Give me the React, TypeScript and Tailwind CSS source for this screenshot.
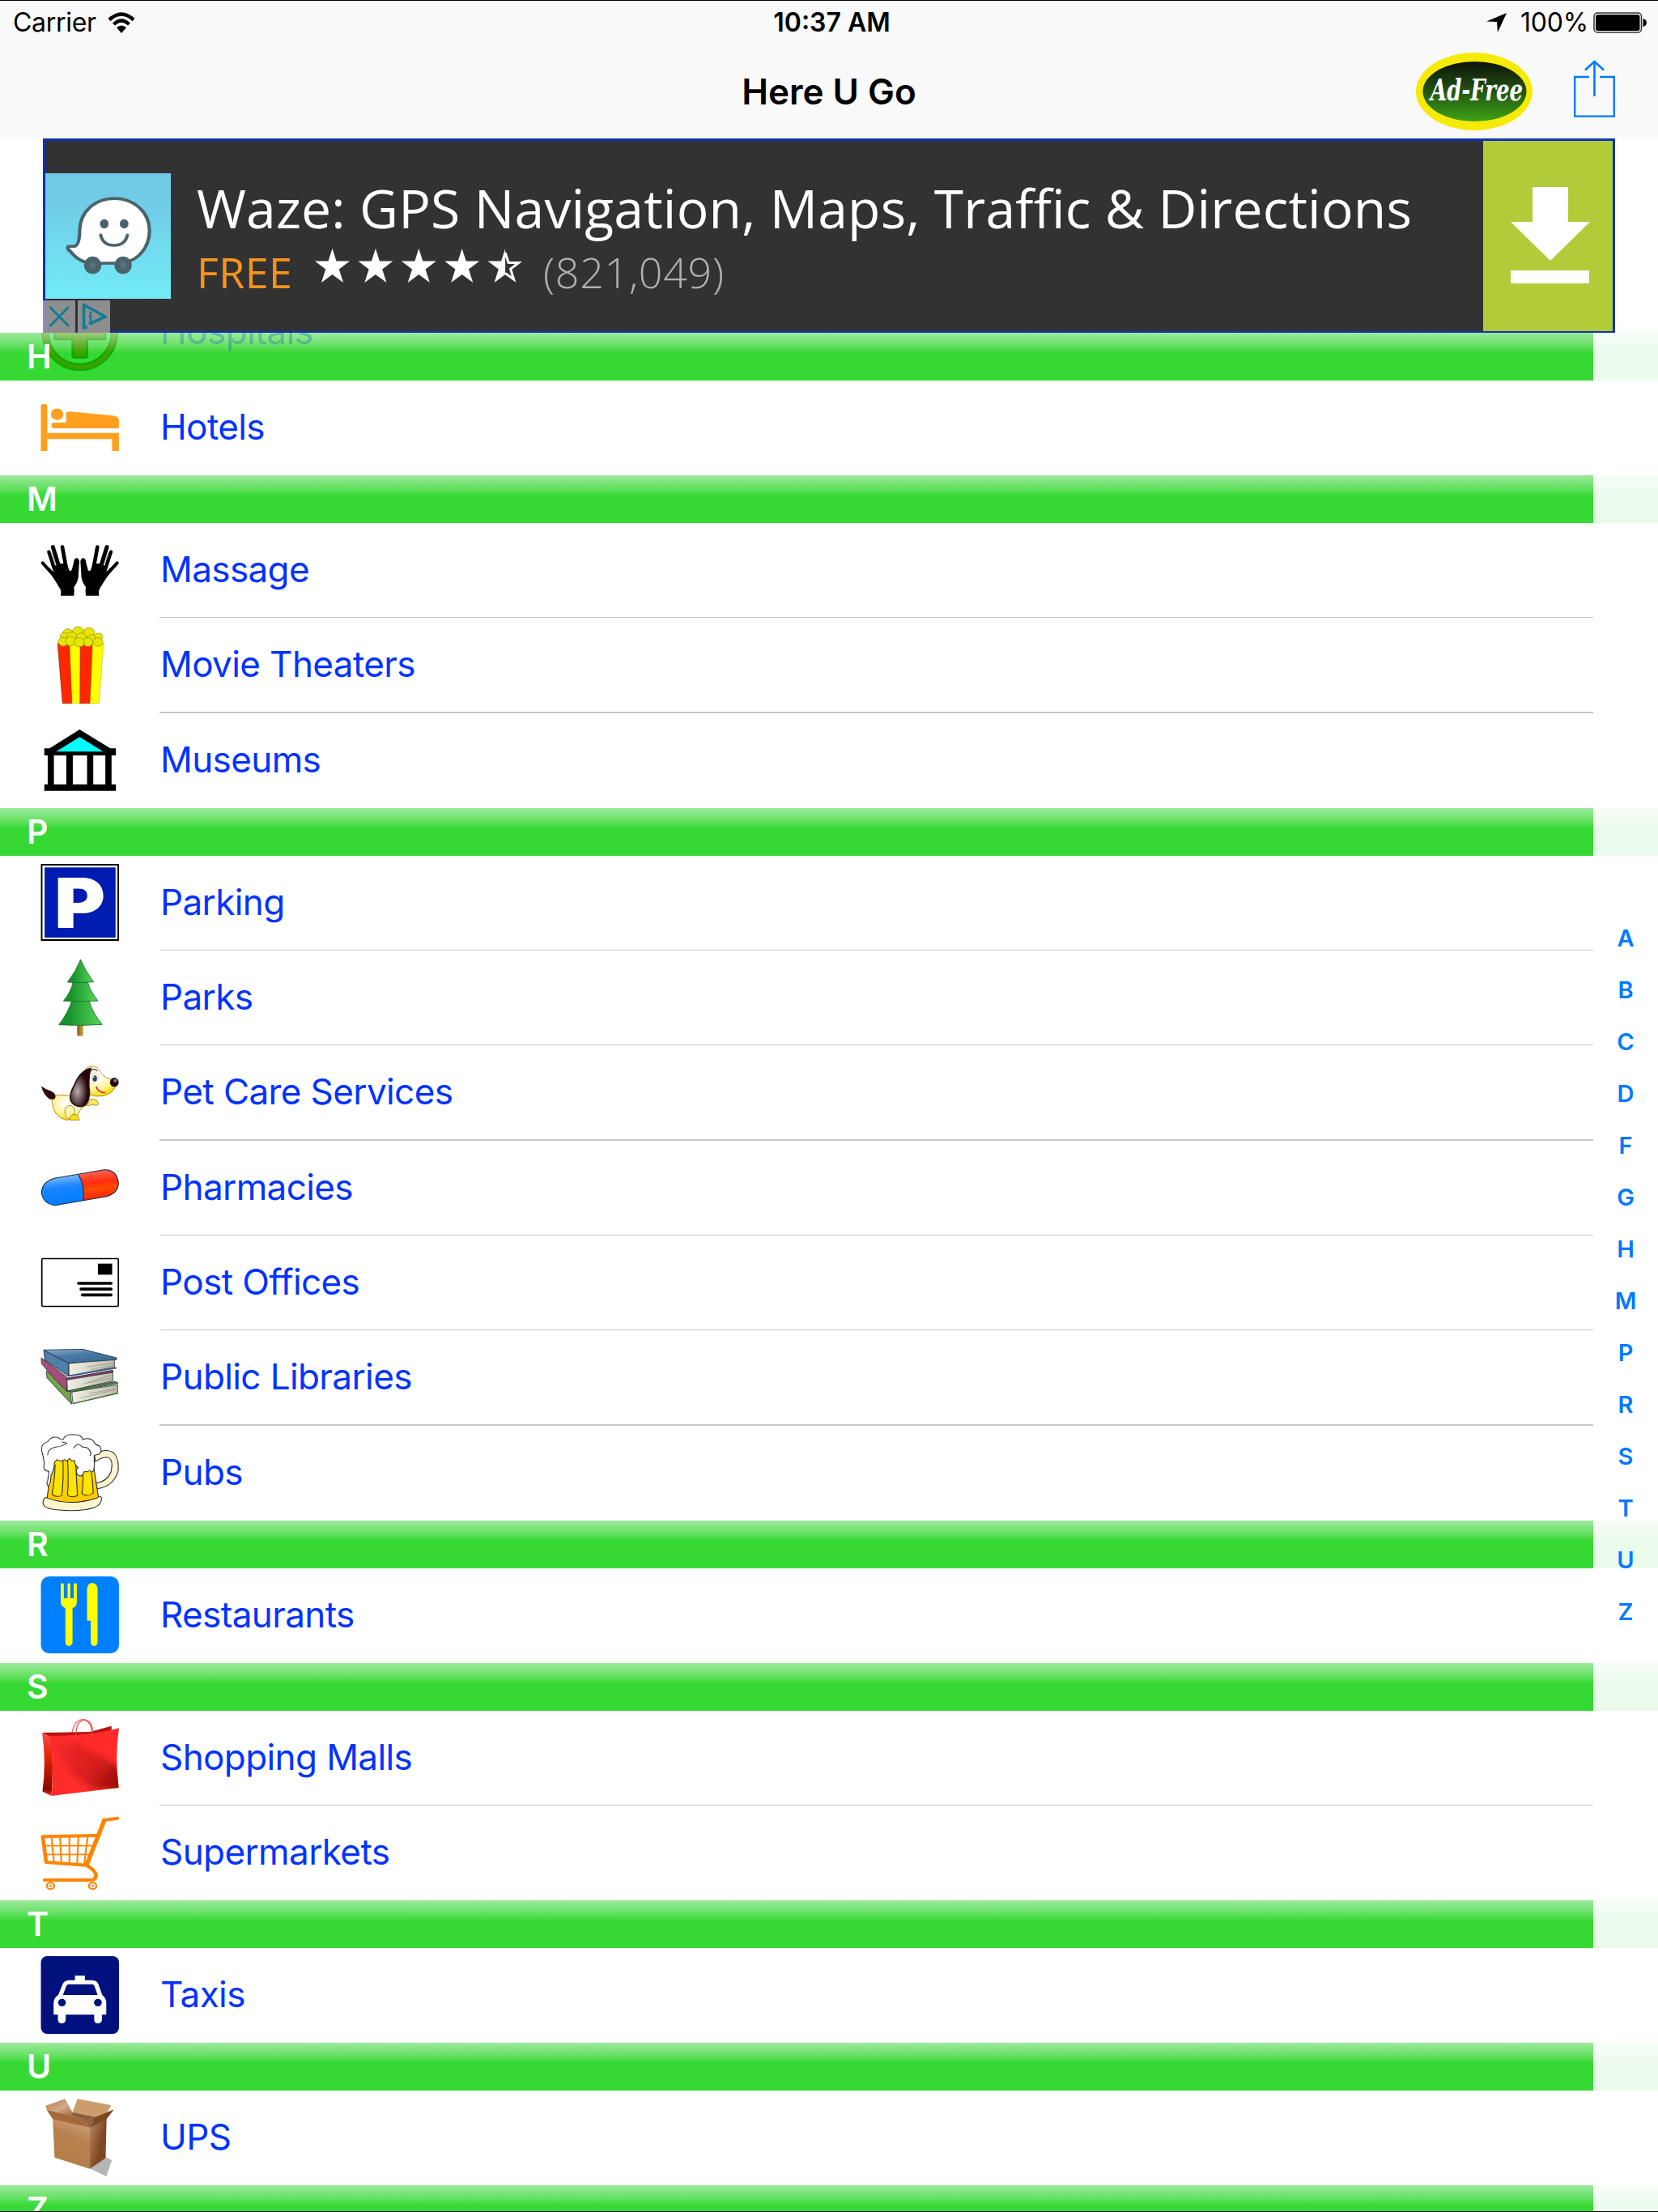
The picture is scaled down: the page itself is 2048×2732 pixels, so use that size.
import React from "react";

type IconProps = { box: string; children: React.ReactNode };

function RowIcon({ box, children }: IconProps) {
  return (
    <svg className="ml-12 h-[117px] w-[100px] shrink-0" viewBox={box} preserveAspectRatio="none" fill="none">
      {children}
    </svg>
  );
}

const HotelIcon = () => (
  <RowIcon box="107.5 1228 224 305.7">
    <g fill="#ff9f1f">
      <path d="M113 1455V1312Q113 1304 122 1304T131 1312V1397H329V1455H310V1417H131V1455Z" />
      <ellipse cx="158" cy="1337" rx="17" ry="19" />
      <path d="M183 1363V1337Q183 1327 192 1328L312 1341Q329 1343 329 1357V1382H150Q142 1382 142 1373T150 1364Z" />
    </g>
  </RowIcon>
);

const MassageIcon = () => {
  const hand = (
    <>
      <path
        d="M43 110L82 168Q96 190 104 204Q108 212 105 227H154Q157 212 154 196Q172 172 171 146L174 100Q172 88 163 88Q154 90 153 104L148 124Q144 142 136 132L128 108L98 108L84 116L82 136Q72 138 66 126Z"
        fill="#000"
      />
      <path d="M38 106L74 146" stroke="#000" strokeWidth="12" strokeLinecap="round" />
      <path d="M61 65L82 130" stroke="#000" strokeWidth="13" strokeLinecap="round" />
      <path d="M76 47L98 118" stroke="#000" strokeWidth="15" strokeLinecap="round" />
      <path d="M111 47L124 118" stroke="#000" strokeWidth="14" strokeLinecap="round" />
      <path d="M69 66L87 112" stroke="#999" strokeWidth="3" />
      <path d="M95 60L107 104L108 84Z" fill="#fff" />
    </>
  );
  return (
    <RowIcon box="24 -42 300 351">
      {hand}
      <g transform="translate(352 0) scale(-1 1)">{hand}</g>
    </RowIcon>
  );
};

const PopcornIcon = () => (
  <RowIcon box="125.4 369 261.3 351">
    <path d="M186 464L202 686H320L334 464Z" fill="#ffff00" stroke="#8a8a00" strokeWidth="1" />
    <path d="M186 464L202 686H232L224 468ZM259 468L258 686H290L298 468Z" fill="#ff2600" stroke="#7a2a00" strokeWidth="1.5" />
    <g fill="#e6e600" stroke="#929200" strokeWidth="2">
      <circle cx="252" cy="420" r="18" />
      <circle cx="287" cy="424" r="18" />
      <circle cx="219" cy="426" r="16" />
      <circle cx="208" cy="438" r="14" />
      <circle cx="317" cy="440" r="14" />
      <circle cx="262" cy="442" r="16" />
      <circle cx="231" cy="438" r="16" />
      <circle cx="294" cy="446" r="14" />
      <circle cx="204" cy="458" r="16" />
      <circle cx="316" cy="459" r="16" />
      <circle cx="228" cy="456" r="17" />
      <circle cx="284" cy="459" r="16" />
      <circle cx="256" cy="460" r="17" />
    </g>
  </RowIcon>
);

const MuseumIcon = () => (
  <RowIcon box="125.4 723 261.3 351">
    <path d="M143 853H160L257 783L356 853H374V879H360V986H374V1010H143V986H154V879H143Z" fill="#000" />
    <path d="M181 865L257 811L333 865Z" fill="#0ff" />
    <path d="M174 879H214V986H174ZM235 879H281V986H235ZM301 879H340V986H301Z" fill="#fff" />
  </RowIcon>
);

const ParkingIcon = () => (
  <RowIcon box="125.4 51 261.3 351">
    <rect x="132" y="81" width="252" height="285" fill="#000" />
    <rect x="137" y="87" width="242" height="273" fill="#fff" />
    <rect x="144" y="94" width="229" height="260" fill="#001bb0" />
    <text x="176" y="317" fontSize="257" fontWeight="900" fontFamily="Inter, sans-serif" fill="#fff" textLength="164" lengthAdjust="spacingAndGlyphs">
      P
    </text>
  </RowIcon>
);

const ParksIcon = () => (
  <RowIcon box="125.4 402 261.3 351">
    <defs>
      <linearGradient id="pine" x1="0" x2="1">
        <stop offset="0.2" stopColor="#17912a" />
        <stop offset="0.9" stopColor="#4ecf55" />
      </linearGradient>
      <linearGradient id="trunk" x1="0" x2="1">
        <stop stopColor="#7d5c14" />
        <stop offset="1" stopColor="#d9a94e" />
      </linearGradient>
    </defs>
    <path d="M249 672H269V716Q259 721 249 716Z" fill="url(#trunk)" />
    <g fill="url(#pine)" stroke="#1d6e2a" strokeWidth="2.5" strokeLinejoin="round">
      <path d="M231 590Q220 632 190 677Q260 682 330 676Q300 636 287 588Z" />
      <path d="M236 518Q230 553 205 589Q260 594 316 588Q290 552 282 516Z" />
      <path d="M260 435Q245 480 218 519Q260 523 302 518Q275 478 260 435Z" />
    </g>
  </RowIcon>
);

const PetIcon = () => (
  <RowIcon box="125.4 753 261.3 351">
    <defs>
      <radialGradient id="fur" cx="0.45" cy="0.35" r="0.65">
        <stop offset="0.25" stopColor="#fffdf0" />
        <stop offset="0.7" stopColor="#fff18b" />
        <stop offset="1" stopColor="#ffd800" />
      </radialGradient>
      <radialGradient id="ear" cx="0.35" cy="0.6" r="0.5">
        <stop stopColor="#b9aeb0" />
        <stop offset="1" stopColor="#250508" />
      </radialGradient>
    </defs>
    <g stroke="#8d6c16" strokeWidth="2">
      <path d="M172 940Q200 934 232 940L286 970Q262 982 255 1002Q246 1028 214 1030Q172 1020 168 962Z" fill="url(#fur)" />
      <path d="M268 975Q290 976 287 955Q305 948 314 960Q322 974 311 976Q300 970 290 976Z" fill="#ffe55c" />
      <path d="M230 976Q208 976 209 1002Q212 1026 228 1026M230 976Q246 988 238 1012" fill="#fff6a8" />
      <path d="M226 1030Q222 1012 239 1009Q254 1010 256 1030Z" fill="#ffdd11" />
      <path d="M262 870Q274 828 300 830Q316 834 325 854Q336 872 362 880L372 908Q356 944 312 942Q290 940 282 930Z" fill="url(#fur)" />
    </g>
    <path d="M293 838Q258 848 242 896Q222 936 228 958Q238 982 264 980Q286 974 289 930Q283 880 293 838Z" fill="url(#ear)" stroke="#250508" strokeWidth="4" />
    <path d="M133 904Q148 918 163 922Q180 930 179 944Q178 956 161 953Q140 938 133 904Z" fill="#2b0a10" />
    <ellipse cx="306" cy="873" rx="11" ry="18" fill="#fff" stroke="#b9a984" strokeWidth="1.5" />
    <ellipse cx="306" cy="876" rx="7" ry="11" fill="#274455" />
    <circle cx="303" cy="871" r="2.5" fill="#fff" />
    <path d="M294 848Q304 834 314 849" stroke="#222" strokeWidth="3" />
    <path d="M310 906Q318 930 340 928" stroke="#d5282b" strokeWidth="4.5" />
    <ellipse cx="369" cy="890" rx="14" ry="17" fill="#25060a" />
    <ellipse cx="372" cy="884" rx="6" ry="6" fill="#8c7a7d" />
  </RowIcon>
);

const PharmacyIcon = () => (
  <RowIcon box="125.4 27 261.3 351">
    <defs>
      <linearGradient id="pillBlue" x1="0.4" y1="0" x2="0.55" y2="1">
        <stop stopColor="#8cc4ff" />
        <stop offset="0.4" stopColor="#1b86ff" />
        <stop offset="1" stopColor="#007bff" />
      </linearGradient>
      <linearGradient id="pillRed" x1="0.4" y1="0" x2="0.55" y2="1">
        <stop stopColor="#ff6a55" />
        <stop offset="0.4" stopColor="#ff2d10" />
        <stop offset="0.6" stopColor="#ff4a00" />
        <stop offset="1" stopColor="#ff2000" />
      </linearGradient>
    </defs>
    <path d="M253 152L176 166Q134 180 134 222Q142 262 177 266L269 248Q274 190 253 152Z" fill="url(#pillBlue)" />
    <path d="M253 152L336 134Q376 132 382 180Q384 220 344 233L269 248Q274 190 253 152Z" fill="url(#pillRed)" />
    <path d="M176 166L336 134Q376 132 382 180Q384 220 344 233L177 266Q142 262 134 222Q134 180 176 166ZM253 152Q274 190 269 248" stroke="#1b2b44" strokeWidth="3" />
  </RowIcon>
);

const PostIcon = () => (
  <RowIcon box="125.4 378 261.3 351">
    <rect x="135" y="463.500" width="247" height="177" rx="4" fill="#fff" stroke="#000" strokeWidth="4.500" />
    <rect x="316" y="482" width="46" height="41" fill="#000" />
    <path d="M254 555H358M262 576.500H358M266 598H358" stroke="#000" strokeWidth="11" strokeLinecap="round" />
  </RowIcon>
);

const LibraryIcon = () => (
  <RowIcon box="24 -18 300 351">
    <defs>
      <linearGradient id="cover" x1="0" x2="0.6" y1="0" y2="1">
        <stop stopColor="#8fb2cd" />
        <stop offset="0.5" stopColor="#4a7aa5" />
        <stop offset="1" stopColor="#3c6a96" />
      </linearGradient>
      <linearGradient id="leaves" x1="0" x2="1">
        <stop stopColor="#f0f0e6" />
        <stop offset="1" stopColor="#bcbbab" />
      </linearGradient>
    </defs>
    <g stroke="#26333b" strokeWidth="2.500" strokeLinejoin="round">
      <path d="M52 132L140 206L146 256Q96 204 54 158Z" fill="#76a24a" />
      <path d="M146 210L316 184V216L150 254Z" fill="url(#leaves)" />
      <path d="M130 207L308 172L318 178L146 211Z" fill="#5a8a35" />
      <path d="M33 84L128 156V209Q78 160 34 106Z" fill="#a64d7c" />
      <path d="M128 164L298 134V170L130 207Z" fill="url(#leaves)" />
      <path d="M126 160L298 130V138L128 166Z" fill="#8d3a67" />
      <path d="M42 55L134 104V153L46 92Z" fill="#4f7ea6" />
      <path d="M135 105L304 86V118L136 151Z" fill="url(#leaves)" />
      <path d="M42 55L186 52L312 84V91L134 104Z" fill="url(#cover)" />
    </g>
    <path d="M136 151L312 121" stroke="#2f5b86" strokeWidth="5" />
    <path d="M150 254L318 214" stroke="#4d742f" strokeWidth="4" />
    <path d="M200 118L300 104M214 128L300 112M190 180L290 160M206 176L290 148M176 234L306 202M210 216L312 198" stroke="#8e8d80" strokeWidth="2" />
  </RowIcon>
);

const PubIcon = () => (
  <RowIcon box="125.4 1083 261.3 351">
    <defs>
      <linearGradient id="beer" x1="0" x2="0" y1="0" y2="1">
        <stop stopColor="#ffdc00" />
        <stop offset="1" stopColor="#ffc800" />
      </linearGradient>
    </defs>
    <g stroke="#2b2b2b" strokeWidth="2.800" strokeLinejoin="round">
      <path
        d="M305 1190Q340 1164 366 1182Q386 1206 381 1252Q366 1308 314 1316L308 1295Q344 1292 358 1254Q368 1206 346 1199Q324 1200 308 1216Z"
        fill="#fbf3cf"
      />
      <path d="M168 1205L152 1352Q230 1384 318 1350L303 1240L296 1200Z" fill="url(#beer)" />
      <path
        d="M146 1348Q136 1360 140 1376Q150 1392 190 1395Q262 1402 304 1386Q328 1376 328 1350Q322 1340 314 1350Q226 1384 146 1348Z"
        fill="#fdf5cc"
      />
      <path d="M178 1226Q176 1290 168 1336Q178 1350 199 1342Q206 1280 203 1206M218 1206Q222 1280 218 1340Q232 1352 250 1341Q246 1270 244 1206M268 1266Q268 1310 264 1334Q280 1348 301 1332Q300 1290 294 1250" fill="#ffe400" />
      <path
        d="M156 1308Q148 1300 154 1286L158 1252Q136 1250 143 1222Q140 1196 135 1178Q130 1150 154 1142Q164 1120 186 1126Q198 1136 204 1134Q210 1112 240 1116Q262 1114 268 1134Q288 1124 302 1140Q306 1154 322 1158Q332 1176 320 1188L304 1192L304 1216Q306 1240 300 1252Q292 1256 290 1248Q280 1256 272 1252Q266 1276 252 1266Q240 1250 252 1238Q240 1228 240 1210L232 1214L224 1204L216 1214L208 1208L196 1214L184 1208L176 1218Q174 1250 164 1268Q166 1290 156 1308Z"
        fill="#fff"
      />
      <path d="M154 1192Q152 1168 180 1162Q204 1158 217 1146M237 1166Q252 1140 266 1162Q288 1158 294 1188L290 1194M200 1145Q210 1142 214 1148" strokeWidth="3" />
    </g>
  </RowIcon>
);

const RestaurantIcon = () => (
  <RowIcon box="125.4 111 261.3 351">
    <rect x="132" y="141" width="252" height="285" rx="27" ry="31" fill="#007fff" />
    <g fill="#ff0">
      <path d="M196 170Q201 162 206 170V222H218V170Q222 162 227 170V222H238V170Q243 162 248 170V238Q246 256 234 258V388Q230 399 222 399T211 388V258Q198 254 196 238Z" />
      <path d="M281 186Q283 166 298 165Q314 167 315 186V388Q312 399 304 399T293 388V305H281Z" />
    </g>
  </RowIcon>
);

const ShoppingIcon = () => (
  <RowIcon box="125.4 639 261.3 351">
    <defs>
      <linearGradient id="bag" gradientUnits="userSpaceOnUse" x1="260" y1="740" x2="350" y2="960">
        <stop stopColor="#ff2d2d" />
        <stop offset="0.22" stopColor="#f52828" />
        <stop offset="0.5" stopColor="#c21a12" />
        <stop offset="0.66" stopColor="#d42020" />
        <stop offset="0.8" stopColor="#ff2d2d" />
      </linearGradient>
      <linearGradient id="bagSide" x1="0" x2="0" y1="0" y2="1">
        <stop stopColor="#ff4b4b" />
        <stop offset="0.4" stopColor="#e02200" />
        <stop offset="0.9" stopColor="#8a0800" />
        <stop offset="1" stopColor="#ff3030" />
      </linearGradient>
      <linearGradient id="bagShade" gradientUnits="userSpaceOnUse" x1="180" y1="790" x2="384" y2="920">
        <stop stopColor="#e42424" stopOpacity="0.6" />
        <stop offset="0.5" stopColor="#d01c1c" stopOpacity="0.75" />
        <stop offset="1" stopColor="#900c00" />
      </linearGradient>
      <filter id="soft" x="-0.2" y="-0.2" width="1.4" height="1.4">
        <feGaussianBlur stdDeviation="9" />
      </filter>
      <clipPath id="bagClip">
        <path d="M162 732Q290 732 384 703Q370 810 383 924L166 954Q176 850 162 732Z" />
      </clipPath>
    </defs>
    <path d="M232 726Q238 672 270 671Q296 674 299 712" stroke="#f66" strokeWidth="3.500" />
    <path d="M136 720L290 717L360 695V716L168 740Z" fill="#b81414" />
    <path d="M136 720L165 736Q174 850 166 954L137 938Q150 830 136 720Z" fill="url(#bagSide)" />
    <path d="M162 732Q290 732 384 703Q370 810 383 924L166 954Q176 850 162 732Z" fill="#ff2b2b" />
    <g clipPath="url(#bagClip)">
      <path d="M175 770L250 755L400 860V935L300 925L230 870Z" fill="url(#bagShade)" filter="url(#soft)" />
    </g>
    <path d="M246 750Q240 680 272 673Q302 684 295 741" stroke="#e94444" strokeWidth="3" />
  </RowIcon>
);

const CartIcon = () => (
  <RowIcon box="125.4 990 261.3 351">
    <g stroke="#ff8400" strokeLinejoin="round" strokeLinecap="round">
      <path d="M379 1037L337 1044L279 1210" strokeWidth="12" />
      <path d="M318 1101L138 1105L149 1200L279 1211Q309 1232 310 1248Q310 1264 296 1266H144" strokeWidth="12" />
      <path d="M146 1139H298M150 1171H288M166 1107L174 1198M194 1107L198 1200M224 1106V1202M253 1106L249 1204M283 1106L272 1204" strokeWidth="5.500" />
      <path d="M337 1044L281 1206" strokeWidth="14" />
      <ellipse cx="163" cy="1288" rx="12" ry="12" strokeWidth="6" />
      <ellipse cx="299" cy="1288" rx="12" ry="12" strokeWidth="6" />
      <circle cx="163" cy="1288" r="3.500" strokeWidth="3" />
      <circle cx="299" cy="1288" r="3.500" strokeWidth="3" />
    </g>
  </RowIcon>
);

const TaxiIcon = () => (
  <RowIcon box="125.4 228 261.3 351">
    <rect x="132" y="258" width="252" height="288" rx="20" ry="23" fill="#00107d" />
    <path
      d="M242 330H274V347H298Q312 348 317 360L330 402Q343 414 343 430V475H329V494Q327 507 316 507T304 494V475H212V494Q210 507 199 507T187 494V475H173V430Q174 412 188 402L202 362Q207 348 222 347H242Z"
      fill="#fff"
    />
    <path d="M220 362H298Q303 363 305 369L315 402H203L214 369Q216 363 220 362Z" fill="#00107d" />
    <ellipse cx="200" cy="430" rx="12.500" ry="14" fill="#00107d" />
    <ellipse cx="316" cy="430" rx="12.500" ry="14" fill="#00107d" />
  </RowIcon>
);

const BoxIcon = () => (
  <RowIcon box="125.4 756 261.3 351">
    <defs>
      <linearGradient id="front" x1="0.6" y1="0" x2="0.4" y2="0.7">
        <stop stopColor="#cfa07a" />
        <stop offset="0.5" stopColor="#b9814f" />
        <stop offset="1" stopColor="#b67e4b" />
      </linearGradient>
      <linearGradient id="side" x1="0" y1="0" x2="0.7" y2="0.5">
        <stop stopColor="#b88a68" />
        <stop offset="1" stopColor="#7f4722" />
      </linearGradient>
      <linearGradient id="flap" x1="0" y1="0" x2="0.9" y2="1">
        <stop stopColor="#b87e50" />
        <stop offset="0.6" stopColor="#d0a98b" />
        <stop offset="1" stopColor="#a86f42" />
      </linearGradient>
    </defs>
    <path d="M290 1045L342 1003L361 1014L343 1074Z" fill="#b5b5b5" />
    <path d="M170 858L290 890V1046L176 1004Z" fill="url(#front)" />
    <path d="M290 890L344 858L341 1006L290 1046Z" fill="url(#side)" />
    <path d="M147 812L210 787L234 838L232 850L151 828Z" fill="url(#flap)" />
    <path d="M250 787L359 810L346 836L310 854L234 836Z" fill="#cb9c6c" />
    <path d="M234 836L310 854L290 884L262 858L232 848Z" fill="#8c5a40" />
    <path d="M151 828L264 857L290 893L170 862Z" fill="#a5683a" />
    <path d="M368 826L306 855L290 893L344 862Z" fill="#7d4824" />
    <path d="M264 857L306 855L290 893Z" fill="#94613e" />
  </RowIcon>
);

type Item = { name: string; icon: () => React.ReactElement; tall?: boolean };
type Section = { letter: string; items: Item[] };

const sections: Section[] = [
  { letter: "H", items: [{ name: "Hotels", icon: HotelIcon }] },
  {
    letter: "M",
    items: [
      { name: "Massage", icon: MassageIcon },
      { name: "Movie Theaters", icon: PopcornIcon, tall: true },
      { name: "Museums", icon: MuseumIcon },
    ],
  },
  {
    letter: "P",
    items: [
      { name: "Parking", icon: ParkingIcon },
      { name: "Parks", icon: ParksIcon },
      { name: "Pet Care Services", icon: PetIcon, tall: true },
      { name: "Pharmacies", icon: PharmacyIcon },
      { name: "Post Offices", icon: PostIcon },
      { name: "Public Libraries", icon: LibraryIcon, tall: true },
      { name: "Pubs", icon: PubIcon },
    ],
  },
  { letter: "R", items: [{ name: "Restaurants", icon: RestaurantIcon }] },
  {
    letter: "S",
    items: [
      { name: "Shopping Malls", icon: ShoppingIcon },
      { name: "Supermarkets", icon: CartIcon },
    ],
  },
  { letter: "T", items: [{ name: "Taxis", icon: TaxiIcon }] },
  { letter: "U", items: [{ name: "UPS", icon: BoxIcon }] },
  { letter: "Z", items: [] },
];

const indexLetters = ["A", "B", "C", "D", "F", "G", "H", "M", "P", "R", "S", "T", "U", "Z"];

function HospitalPeek() {
  return (
    <div className="absolute inset-0 overflow-hidden">
      <svg className="absolute top-0 left-12 h-[59px] w-[100px]" viewBox="24 153 300 177" fill="none">
        <defs>
          <linearGradient id="olive" gradientUnits="userSpaceOnUse" x1="0" x2="0" y1="153" y2="226">
            <stop stopColor="#a3c97c" />
            <stop offset="1" stopColor="#3aa300" />
          </linearGradient>
          <linearGradient id="rim" gradientUnits="userSpaceOnUse" x1="0" x2="0" y1="153" y2="226">
            <stop stopColor="#80cf80" />
            <stop offset="1" stopColor="#0aa800" />
          </linearGradient>
        </defs>
        <circle cx="176" cy="152" r="129" stroke="url(#olive)" strokeWidth="22" />
        <circle cx="176" cy="152" r="139" stroke="url(#rim)" strokeWidth="6" />
        <circle cx="176" cy="152" r="117" stroke="url(#rim)" strokeWidth="6" />
        <path d="M82 140H270V177H203V238Q203 245 196 245H156Q149 245 149 238V177H82Z" fill="url(#olive)" stroke="url(#rim)" strokeWidth="8" strokeLinejoin="round" />
      </svg>
      <span className="absolute top-[-24px] left-[198px] text-[44px] leading-[44px] tracking-[-0.5px] text-[#0060c0] opacity-30">Hospitals</span>
    </div>
  );
}

function SectionView({ section, first }: { section: Section; first: boolean }) {
  return (
    <section>
      <div className="relative flex h-[59px] items-center bg-linear-to-b from-[#9cea9c] to-[#36d933] to-42% pb-px pl-[33px]">
        {first && <HospitalPeek />}
        <h2 className="relative text-[41px] leading-none font-semibold text-white">{section.letter}</h2>
      </div>
      {section.items.map((item, i) => {
        const last = i === section.items.length - 1;
        const Icon = item.icon;
        return (
          <div key={item.name} className={item.tall ? "flex h-[118px]" : "flex h-[117px]"}>
            <Icon />
            <div
              className={
                "mr-20 ml-[49px] flex-1 border-[#c8c7cc] pt-[35px] " + (last ? "" : item.tall ? "border-b-2" : "border-b")
              }
            >
              <span className="block pl-px text-[44px] leading-[44px] tracking-[-0.6px] whitespace-nowrap text-[#0433ff]">{item.name}</span>
            </div>
          </div>
        );
      })}
    </section>
  );
}

function StatusBar() {
  return (
    <div className="grid h-[55px] grid-cols-3 items-center border-t border-black text-[32px] leading-none text-black">
      <div className="flex items-center gap-[14px] pl-4">
        <span className="tracking-[-0.3px]">Carrier</span>
        <svg className="h-[27px] w-[34px]" viewBox="0 0 34 27" fill="none">
          <path d="M2 9.500Q17 -4.500 32 9.500" stroke="#000" strokeWidth="4.500" />
          <path d="M7.500 15Q17 6 26.500 15" stroke="#000" strokeWidth="4.200" />
          <path d="M11 19Q17 14 23 19L17 26Z" fill="#000" />
        </svg>
      </div>
      <div className="pl-[7px] text-center font-semibold">10:37 AM</div>
      <div className="flex items-center justify-end pr-[13px]">
        <svg className="mr-[17px] h-6 w-[25px]" viewBox="0 0 25 24">
          <path d="M25 0L14 24L13 11L0 10.500Z" fill="#000" />
        </svg>
        <span className="mr-[6px] tracking-[-0.2px]">100%</span>
        <svg className="h-[26px] w-[67px]" viewBox="0 0 67 26" fill="none">
          <rect x="1" y="1" width="58.500" height="24" rx="4" stroke="#333" strokeWidth="1.500" />
          <rect x="3" y="3" width="54.500" height="20" rx="2.500" fill="#000" />
          <path d="M61.500 8Q66 9 66 13T61.500 18Z" fill="#000" />
        </svg>
      </div>
    </div>
  );
}

function NavBar() {
  return (
    <div className="grid h-[116px] grid-cols-3">
      <div />
      <h1 className="pt-[36px] text-center text-[44px] leading-[44px] font-semibold">Here U Go</h1>
      <div className="flex items-start justify-end pr-[53px]">
        <svg className="mt-[10px] h-24 w-36" viewBox="0 0 144 96">
          <defs>
            <linearGradient id="adFree" x1="0" x2="0" y1="0" y2="1">
              <stop stopColor="#0d1208" />
              <stop offset="0.5" stopColor="#235414" />
              <stop offset="1" stopColor="#3da316" />
            </linearGradient>
          </defs>
          <ellipse cx="72" cy="48" rx="72" ry="48" fill="#f8ea08" />
          <ellipse cx="72.500" cy="48" rx="64" ry="37" fill="url(#adFree)" />
          <text x="18" y="58.500" fontSize="37" fontWeight="700" fontStyle="italic" fontFamily="'DejaVu Serif Condensed', 'DejaVu Serif', serif" fill="#fff" textLength="114" lengthAdjust="spacingAndGlyphs">
            Ad-Free
          </text>
        </svg>
        <svg className="mt-[19px] ml-[51px] h-[71px] w-[51px]" viewBox="0 0 51 71" fill="none" stroke="#007aff">
          <path d="M19 21H1.200V69.600H49.800V21H32" strokeWidth="2.400" />
          <path d="M25.500 45V2M14 12.500L25.500 2L37 12.500" strokeWidth="2.600" />
        </svg>
      </div>
    </div>
  );
}

const starPath = "M21.500 0L26.500 15.600H43L29.800 25.600L35 42L21.500 32L8 42L13.200 25.600L0 15.600H16.500Z";

function AdBanner() {
  return (
    <div className="relative mr-[53px] ml-[53px] flex h-60 border-x-3 border-t-3 border-b-2 border-[#0d31b8] bg-[#323232]">
      <svg className="mt-10 h-[155px] w-[155px] shrink-0" viewBox="125 559 347 404" preserveAspectRatio="none">
        <defs>
          <linearGradient id="wazeSky" x1="0" x2="0" y1="0" y2="1">
            <stop offset="0.2" stopColor="#71cbe6" />
            <stop offset="1" stopColor="#72ebf8" />
          </linearGradient>
        </defs>
        <rect x="125" y="559" width="347" height="404" fill="url(#wazeSky)" />
        <path
          d="M316 640C262 640 222 682 220 740Q220 790 206 794L188 795Q184 802 194 810Q218 846 252 849L342 848C384 838 412 796 413 746C414 686 372 640 316 640Z"
          fill="#fff"
          stroke="#4a636b"
          strokeWidth="9.500"
        />
        <ellipse cx="256" cy="855" rx="24" ry="28" fill="#4a636b" />
        <ellipse cx="340" cy="855" rx="24" ry="28" fill="#4a636b" />
        <ellipse cx="256" cy="855" rx="9" ry="11" fill="#57717a" />
        <ellipse cx="340" cy="855" rx="9" ry="11" fill="#57717a" />
        <ellipse cx="288" cy="722" rx="12" ry="15" fill="#4a636b" />
        <ellipse cx="343" cy="722" rx="12" ry="15" fill="#4a636b" />
        <path d="M278 758Q285 791 315 791T352 758" fill="none" stroke="#4a636b" strokeWidth="9" strokeLinecap="round" />
      </svg>
      <div className="flex-1 pt-[44px] pl-8 font-['Open_Sans',sans-serif]">
        <div className="text-[66px] leading-[76px] tracking-[0.16px] whitespace-nowrap text-white">Waze: GPS Navigation, Maps, Traffic &amp; Directions</div>
        <div className="mt-3 flex h-[60px] text-[52px] leading-[60px]">
          <span className="w-[146px] tracking-[0.4px] text-[#f7941d]">FREE</span>
          <svg className="mt-[1px] h-[44px] w-[258px]" viewBox="0 0 258 44">
            <g fill="#fff">
              {[0, 53.4, 106.8, 160.2].map((x) => (
                <path key={x} d={starPath} transform={`translate(${x} 0)`} />
              ))}
              <g transform="translate(213.600 0)">
                <path d="M21.500 0V32L8 42L13.200 25.600L0 15.600H16.500Z" />
                <path d="M21.500 5L25.500 17.500H38L28 25.200L32 38L21.500 30.500" fill="none" stroke="#fff" strokeWidth="3" />
              </g>
            </g>
          </svg>
          <span className="ml-6 font-light tracking-[0.7px] text-[#b0b0b0]">(821,049)</span>
        </div>
      </div>
      <div className="flex w-40 justify-center bg-[#b2cc39] pl-[5px]">
        <svg className="mt-[57px] h-[119px] w-[98px]" viewBox="0 0 98 119" fill="#fff">
          <path d="M27 0H71V43H98L49 91L0 43H27Z" />
          <path d="M0 103H97V119H0Z" />
        </svg>
      </div>
      <div className="absolute top-[197px] left-[-3px] flex h-10 gap-[3px]">
        <svg className="h-10 w-10 bg-[#8e8e90]" viewBox="0 0 40 40" fill="none">
          <path d="M1 0V40" stroke="#8090d8" strokeWidth="2.500" />
          <path d="M8.500 8L32 32M32 8L8.500 32" stroke="#127c92" strokeWidth="3" />
        </svg>
        <svg className="h-10 w-10 bg-[#8e8e90]" viewBox="0 0 40 40" fill="none">
          <path d="M15 29L34 20L7.500 5.500V34L12 32.500" stroke="#127c92" strokeWidth="3.600" strokeLinejoin="round" />
          <path d="M13.500 19H16V29M13.500 28H18" stroke="#127c92" strokeWidth="2.600" />
          <circle cx="16" cy="15.500" r="1.700" fill="#127c92" />
        </svg>
      </div>
    </div>
  );
}

export default function App() {
  return (
    <div className="relative flex h-[2732px] w-[2048px] flex-col overflow-hidden border-b border-black bg-white font-[Inter,sans-serif]">
      <header className="bg-[#f9f9f9]">
        <StatusBar />
        <NavBar />
      </header>
      <AdBanner />
      <main className="relative min-h-0 flex-1 overflow-hidden">
        {sections.map((section, i) => (
          <SectionView key={section.letter} section={section} first={i === 0} />
        ))}
        <nav className="absolute inset-y-0 right-0 flex w-20 flex-col items-center bg-white/90 pt-[716px]">
          {indexLetters.map((letter) => (
            <span key={letter} className="h-16 text-[29px] leading-[64px] font-semibold text-[#007aff]">
              {letter}
            </span>
          ))}
        </nav>
      </main>
    </div>
  );
}
